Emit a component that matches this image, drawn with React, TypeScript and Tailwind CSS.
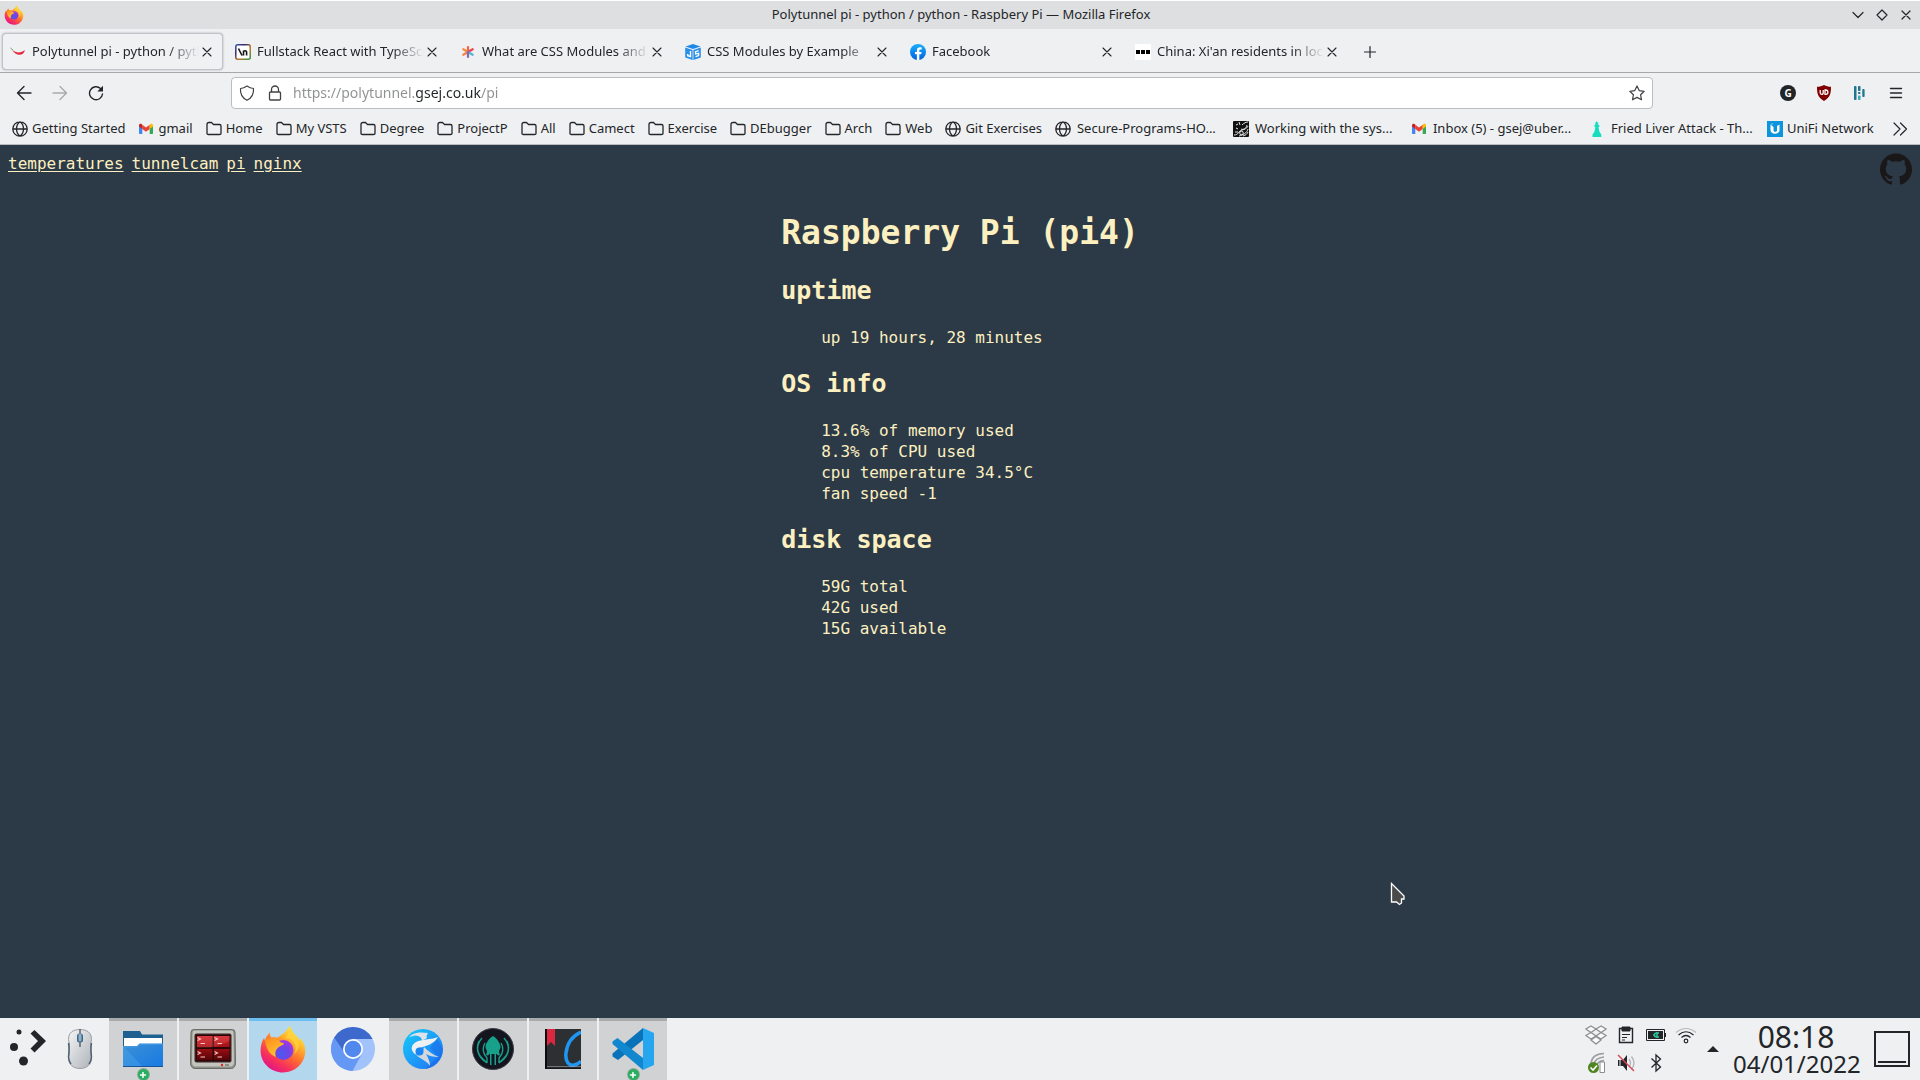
import React, { useId } from "react";
import { SiGithub } from "react-icons/si";

type IconProps = { className?: string };

/* ---------- brand marks ---------- */

function FirefoxLogo({ className }: IconProps) {
  const id = useId();
  return (
    <svg viewBox="0 0 46 48" className={className} aria-hidden="true">
      <defs>
        <linearGradient id={id + "body"} x1="0.85" y1="0.05" x2="0.25" y2="0.95">
          <stop offset="0" stopColor="#fff44f" />
          <stop offset="0.3" stopColor="#ffb32c" />
          <stop offset="0.55" stopColor="#ff6b30" />
          <stop offset="0.8" stopColor="#f7315c" />
          <stop offset="1" stopColor="#e31587" />
        </linearGradient>
        <radialGradient id={id + "globe"} cx="0.4" cy="0.7" r="0.8">
          <stop offset="0" stopColor="#4a5af0" />
          <stop offset="0.5" stopColor="#7542e5" />
          <stop offset="1" stopColor="#b833e1" />
        </radialGradient>
        <linearGradient id={id + "fox"} x1="0" y1="0" x2="0.6" y2="1">
          <stop offset="0" stopColor="#ff8a1e" />
          <stop offset="1" stopColor="#ffc52f" />
        </linearGradient>
      </defs>
      <path
        d="M30 1c.5 4 2 6 5.500 9 2 1.600 3 3.800 4 5.600.3-1.200.2-2 .1-3 4 4 5.900 8.500 5.700 13.700C44.900 38.500 35 47.500 23 47.500S.8 38.300.6 26c-.1-5 1.200-9.600 3.500-13.300.2 1 .3 1.900.9 2.700C6 12.500 7.500 9.500 10 7.500c-.2 2 .3 3.700 1.300 5.300 2-.6 4-.6 6-.1 2.500-2 5.700-3.500 7.700-5.700C26.500 5.300 28 3.200 30 1z"
        fill={`url(#${id}body)`}
      />
      <circle cx="23.500" cy="25" r="10" fill={`url(#${id}globe)`} />
      <path
        d="M5 15c2.500-2 5.500-2.700 8.500-2 3.500.4 5 2.500 7.500 4.500 1.500.6 3 .3 3.100 1.100-.7 2.200-4.800 2.500-6.600 4.600-2.500 2.300-2.500 5.800-1.500 8.800C10 30.200 6 24 5 15z"
        fill={`url(#${id}fox)`}
      />
      <path
        d="M25 13.500c3-1 6.400.4 8.500 3 2.500 3.300 3 8.500.5 13 4.200-3.500 5.600-8.500 4.200-13.500-1.300-4.200-5.400-7.800-8.200-15-2.300 4.500-1.500 8.300-5 12.500z"
        fill="#ffd43a"
        opacity="0.75"
      />
    </svg>
  );
}

function GmailMark({ className }: IconProps) {
  return (
    <svg viewBox="0 0 16 16" className={className} aria-hidden="true">
      <path d="M1 5v7.200c0 .5.300.8.800.8H4.300V6.700z" fill="#4285f4" />
      <path d="M11.700 6.700V13h2.500c.5 0 .8-.3.800-.8V5z" fill="#34a853" />
      <path d="M4.300 3.700v4.200L8 10.700l3.700-2.800V3.700L8 6.500z" fill="#ea4335" />
      <path d="M1 4.300v1.300l3.300 2.500V3.700l-.8-.6C2.400 2.300 1 3 1 4.300z" fill="#c5221f" />
      <path d="M15 4.300v1.300l-3.300 2.500V3.700l.8-.6c1.100-.8 2.500-.1 2.500 1.200z" fill="#fbbc04" />
    </svg>
  );
}

function ChilliIcon({ className }: IconProps) {
  return (
    <svg viewBox="0 0 16 16" className={className} aria-hidden="true">
      <path d="M2.300 5.800C6 9.300 11 9.200 14.900 6 13.800 12.500 5.500 12.500 2.300 5.800z" fill="#e5273f" />
      <path d="M.5 4l2.700 2.500" stroke="#5f9a55" strokeWidth="1" fill="none" />
    </svg>
  );
}

function NewlineIcon({ className }: IconProps) {
  const id = useId();
  return (
    <svg viewBox="0 0 16 16" className={className} aria-hidden="true">
      <defs>
        <linearGradient id={id} x1="0" y1="0" x2="1" y2="1">
          <stop offset="0" stopColor="#3454a4" />
          <stop offset="0.3" stopColor="#38266b" />
          <stop offset="0.6" stopColor="#bb7920" />
          <stop offset="1" stopColor="#2f8f4a" />
        </linearGradient>
      </defs>
      <rect x="0.800" y="0.800" width="14.400" height="14.400" rx="2" fill="#fff" stroke={`url(#${id})`} strokeWidth="1.500" />
      <path d="M3.500 4.500l3.500 7M8.500 11.500V6.500M8.500 8.500q0-1.800 1.600-1.800T11.600 8.500v3" stroke="#171719" strokeWidth="1.600" fill="none" />
    </svg>
  );
}

function AsteriskIcon({ className }: IconProps) {
  return (
    <svg viewBox="0 0 16 16" className={className} aria-hidden="true" strokeWidth="2.200" strokeLinecap="round">
      <path d="M8 8V3" stroke="#f4643c" />
      <path d="M8 8L3.300 5.200" stroke="#f58c3b" />
      <path d="M8 8l4.700-2.800" stroke="#ef3f55" />
      <path d="M8 8l-4.700 2.800" stroke="#f9813f" />
      <path d="M8 8l4.700 2.800" stroke="#52b8cf" />
      <path d="M8 8v5" stroke="#8a63b7" />
    </svg>
  );
}

function CubeIcon({ className }: IconProps) {
  return (
    <svg viewBox="0 0 16 16" className={className} aria-hidden="true">
      <path d="M8 0l7.500 2.500L8 5 .5 2.500z" fill="#1e88e5" />
      <path d="M.2 3.400l7.400 2.500V16L.2 13.500z" fill="#2a8fe9" />
      <path d="M15.800 3.400L8.400 5.900V16l7.400-2.500z" fill="#2a8fe9" />
      <path d="M5.500 7v5.500l-2.800-.8V10" stroke="#fff" strokeWidth="1.400" fill="none" />
      <path d="M13.600 6.700l-3 1v2.200l3-.6v2.300l-3 1" stroke="#fff" strokeWidth="1.300" fill="none" />
    </svg>
  );
}

function FacebookIcon({ className }: IconProps) {
  const id = useId();
  return (
    <svg viewBox="0 0 16 16" className={className} aria-hidden="true">
      <defs>
        <linearGradient id={id} x1="0" y1="0" x2="0" y2="1">
          <stop offset="0" stopColor="#19afff" />
          <stop offset="1" stopColor="#0062e0" />
        </linearGradient>
      </defs>
      <circle cx="8" cy="8" r="8" fill={`url(#${id})`} />
      <path d="M9.300 16V10.300h1.900l.4-2.200H9.300V6.700c0-.8.3-1.300 1.300-1.300h1.100V3.500c-.3-.1-1-.2-1.700-.2-1.900 0-3.100 1.200-3.100 3.200v1.600H5v2.200h1.900V16z" fill="#fff" />
    </svg>
  );
}

function BbcIcon({ className }: IconProps) {
  return (
    <svg viewBox="0 0 16 16" className={className} aria-hidden="true">
      <path d="M0 0h16v16H0z" fill="#fff" />
      <path d="M1 6h4v4H1zM6 6h4v4H6zM11 6h4v4h-4z" fill="#000" />
    </svg>
  );
}

/* ---------- line icons ---------- */

function Line({ d, className, box = 16, width = 1.2 }: { d: string; className?: string; box?: number; width?: number }) {
  return (
    <svg
      viewBox={`0 0 ${box} ${box}`}
      className={className}
      fill="none"
      stroke="currentColor"
      strokeWidth={width}
      strokeLinecap="round"
      strokeLinejoin="round"
      aria-hidden="true"
    >
      <path d={d} />
    </svg>
  );
}

const CROSS = "M4 4l8 8M12 4l-8 8";
const FOLDER = "M1 12.500V3.500Q1 1.500 3 1.500h2.500L7.500 3.500H13.500Q15 3.500 15 5v7.500Q15 13.500 13.500 13.500h-11Q1 13.500 1 12.500z";
const GLOBE =
  "M8 .8a7.200 7.200 0 1 0 0 14.400A7.200 7.200 0 0 0 8 .8zM8 .8C5 3 4.500 5.500 4.500 8s.5 5 3.500 7.200C11 13 11.500 10.500 11.500 8S11 3 8 .8zM1 8h14";

function SwirlIcon({ className }: IconProps) {
  return (
    <svg viewBox="0 0 16 16" className={className} aria-hidden="true">
      <rect width="16" height="16" rx="1" fill="#111" />
      <g stroke="#fff" strokeWidth="0.900" fill="none">
        <path d="M3 4l2-1M6 1l1 3M3 7l2 1M2 11h3M9 4c2-2 4-3 6-3M8 8c2 1 5 0 6-4M1 14c5 0 4-4 8-5s5-2 6-4M6 15c4-1 8-3 9-7M10 15c3-1 4-2 5-4" />
        <circle cx="8.500" cy="12" r="1.800" />
      </g>
    </svg>
  );
}

function ChessIcon({ className }: IconProps) {
  return (
    <svg viewBox="0 0 16 16" className={className} aria-hidden="true">
      <path d="M7.500 0l.8 1.500h1.200L9 3.500l2 1.500-1.500 1 .8 4.500 2 3V16H3.500v-2.500l2-3L6.300 6 4.800 5l1.700-1.500-.5-2h1z" fill="#15ddc0" />
    </svg>
  );
}

function UnifiIcon({ className }: IconProps) {
  return (
    <svg viewBox="0 0 16 16" className={className} aria-hidden="true">
      <path d="M0 0h16v16H0z" fill="#0c94dc" />
      <path d="M3.500 3.500v5.500c0 5 9 5 9 0V3.500L10 5v4.500c0 1.800-3.500 1.800-3.500 0V6z" fill="#fff" />
      <path d="M4.500 2.500h1v1h-1z" fill="#fff" />
    </svg>
  );
}

/* ---------- window data ---------- */

const tabs = [
  { title: "Polytunnel pi - python / python - Raspbery Pi", icon: ChilliIcon, active: true },
  { title: "Fullstack React with TypeScript", icon: NewlineIcon },
  { title: "What are CSS Modules and why", icon: AsteriskIcon },
  { title: "CSS Modules by Example", icon: CubeIcon },
  { title: "Facebook", icon: FacebookIcon },
  { title: "China: Xi'an residents in lockdown", icon: BbcIcon },
];

const Folder = ({ className }: IconProps) => <Line d={FOLDER} className={className} width={1.3} />;
const Globe = ({ className }: IconProps) => <Line d={GLOBE} className={className} width={1.3} />;

const bookmarks = [
  { label: "Getting Started", icon: Globe },
  { label: "gmail", icon: GmailMark },
  { label: "Home", icon: Folder },
  { label: "My VSTS", icon: Folder },
  { label: "Degree", icon: Folder },
  { label: "ProjectP", icon: Folder },
  { label: "All", icon: Folder },
  { label: "Camect", icon: Folder },
  { label: "Exercise", icon: Folder },
  { label: "DEbugger", icon: Folder },
  { label: "Arch", icon: Folder },
  { label: "Web", icon: Folder },
  { label: "Git Exercises", icon: Globe },
  { label: "Secure-Programs-HO...", icon: Globe, long: true },
  { label: "Working with the sys...", icon: SwirlIcon, long: true },
  { label: "Inbox (5) - gsej@uber...", icon: GmailMark, long: true },
  { label: "Fried Liver Attack - Th...", icon: ChessIcon, long: true },
  { label: "UniFi Network", icon: UnifiIcon },
];

function TitleBar() {
  return (
    <header className="grid h-[29px] grid-cols-[1fr_auto_1fr] items-center border-t border-white bg-[#dedfe1] pl-1 pr-0.5">
      <FirefoxLogo className="size-5" />
      <h1 className="text-[13px]">Polytunnel pi - python / python - Raspbery Pi — Mozilla Firefox</h1>
      <div className="flex justify-end">
        <button aria-label="Minimise" className="flex w-6 justify-center">
          <Line d="M3 5.500l5 5 5-5" className="size-4" />
        </button>
        <button aria-label="Maximise" className="flex w-6 justify-center">
          <Line d="M8 3l5 5-5 5-5-5z" className="size-4" />
        </button>
        <button aria-label="Close window" className="flex w-6 justify-center">
          <Line d={CROSS} className="size-4" />
        </button>
      </div>
    </header>
  );
}

function TabStrip() {
  return (
    <div className="flex h-11 items-center gap-1 border-b border-[#a6a8aa] pl-0.5 pt-0.5">
      {tabs.map(({ title, icon: Icon, active }) => (
        <div
          key={title}
          className={
            active
              ? "flex h-[37px] w-[221px] min-w-0 items-center gap-1.5 rounded border border-[#c3c4ca] bg-[#f0f1f3] pl-[7px] pr-[7px] shadow-[0_0_2px_#9fa0a8]"
              : "flex h-[37px] w-[221px] min-w-0 items-center gap-1.5 px-2"
          }
        >
          <Icon className="size-4 shrink-0" />
          <button className="min-w-0 flex-1 overflow-hidden whitespace-nowrap text-left [mask-image:linear-gradient(to_right,black_calc(100%-32px),transparent)]">
            {title}
          </button>
          <button aria-label={"Close " + title} className="-ml-1.5 shrink-0">
            <Line d={CROSS} className="size-4" width={1.1} />
          </button>
        </div>
      ))}
      <button aria-label="New tab" className="ml-2.5">
        <Line d="M8 2.500v11M2.500 8h11" className="size-4" />
      </button>
    </div>
  );
}

function NavBar() {
  return (
    <div className="flex h-10 items-center px-1.5">
      <button aria-label="Back" className="flex w-9 justify-center">
        <Line d="M15 8H1.500M8 1.500L1.500 8 8 14.500" className="size-4" width={1.4} />
      </button>
      <button aria-label="Forward" className="flex w-9 justify-center text-[#a9abad]">
        <Line d="M1 8h13.500M8 1.500L14.500 8 8 14.500" className="size-4" width={1.4} />
      </button>
      <button aria-label="Reload" className="flex w-9 justify-center">
        <svg viewBox="0 0 16 16" className="size-4" aria-hidden="true">
          <path d="M12.500 3.500A6.500 6.500 0 1 0 14.500 9" fill="none" stroke="currentColor" strokeWidth="1.400" strokeLinecap="round" />
          <path d="M15 .800V6.500H9.300z" fill="currentColor" />
        </svg>
      </button>
      <form className="mx-[117px] flex h-8 flex-1 items-center rounded border border-[#bbbdbf] bg-white px-[7px]">
        <Line d="M8 1c2 1.500 4 2.300 6.500 2.500C15 9 12.500 13 8 15.300 3.500 13 1 9 1.500 3.500 4 3.300 6 2.500 8 1z" className="size-4 text-[#3f4144]" />
        <Line d="M3.500 7h9q1 0 1 1v6q0 1-1 1h-9q-1 0-1-1V8q0-1 1-1zM4.500 7V4.500a3.500 3.500 0 0 1 7 0V7" className="ml-3 size-4 text-[#3f4144]" width={1.3} />
        <input
          aria-label="Address"
          defaultValue="https://polytunnel.gsej.co.uk/pi"
          className="ml-2.5 min-w-0 flex-1 bg-[linear-gradient(to_right,#8e9092_122px,#232629_122px,#232629_188px,#8e9092_188px)] bg-clip-text text-sm text-transparent caret-black outline-none"
        />
        <button type="button" aria-label="Bookmark this page">
          <Line d="M8 1l2.200 4.600 5 .7-3.600 3.500.9 5L8 12.400l-4.500 2.400.9-5L.8 6.300l5-.7z" className="size-4 text-[#3f4144]" />
        </button>
      </form>
      <button aria-label="Grammar extension" className="flex w-9 justify-center">
        <span className="flex size-4 items-center justify-center rounded-full bg-[#222528] text-[10px] font-bold text-white">G</span>
      </button>
      <button aria-label="Content blocker" className="flex w-9 justify-center">
        <svg viewBox="0 0 16 16" className="size-4" aria-hidden="true">
          <path d="M8 0c2 1.300 4.300 1.700 7 1.800 0 6-.5 10.700-7 14.200C1.500 12.500 1 7.800 1 1.800 3.700 1.700 6 1.300 8 0z" fill="#800000" />
          <path d="M4.200 5v2.800q0 1.500 1.500 1.500t1.500-1.500V5M9 5v4.300h.8q2.100 0 2.100-2.100T9.800 5z" stroke="#fff" strokeWidth="1.300" fill="none" />
        </svg>
      </button>
      <button aria-label="Annotations" className="flex w-9 justify-center">
        <svg viewBox="0 0 16 16" className="size-4" fill="#20768c" aria-hidden="true">
          <rect x="2" y="1" width="2.500" height="14" rx="0.800" />
          <rect x="6" y="1" width="2.500" height="5" rx="0.800" />
          <rect x="6" y="10.500" width="2.500" height="4.500" rx="0.800" fill="#3fa6bb" />
          <rect x="6" y="7" width="2.500" height="2" rx="0.800" />
          <rect x="10.300" y="4" width="2.300" height="8" rx="0.800" />
        </svg>
      </button>
      <button aria-label="Menu" className="flex w-9 justify-center">
        <Line d="M2.500 3.500h11M2.500 8h11M2.500 12.500h11" className="size-4" width={1.4} />
      </button>
    </div>
  );
}

function BookmarksBar() {
  return (
    <nav aria-label="Bookmarks" className="flex h-8 items-center gap-[13px] overflow-hidden whitespace-nowrap border-b border-[#b9bbbd] px-3">
      {bookmarks.map(({ label, icon: Icon, long }) => (
        <button key={label} className={long ? "flex min-w-[165px] items-center gap-1.5" : "flex items-center gap-1"}>
          <Icon className="size-4 shrink-0" />
          {label}
        </button>
      ))}
      <button aria-label="More bookmarks" className="ml-auto">
        <Line d="M2 2l6 6-6 6M8.500 2l6 6-6 6" className="size-4" />
      </button>
    </nav>
  );
}

/* ---------- page ---------- */

const links = ["temperatures", "tunnelcam", "pi", "nginx"];

const sections = [
  { heading: "uptime", lines: ["up 19 hours, 28 minutes"] },
  {
    heading: "OS info",
    lines: ["13.6% of memory used", "8.3% of CPU used", "cpu temperature 34.5°C", "fan speed -1"],
  },
  { heading: "disk space", lines: ["59G total", "42G used", "15G available"] },
];

function StatusPage() {
  return (
    <main className="relative flex-1 bg-[#2c3946] font-['DejaVu_Sans_Mono',monospace] text-base text-[#fcf0c0]">
      <div className="flex h-[65px] items-start justify-between p-2">
        <nav className="flex gap-2 leading-[21px]">
          {links.map((link) => (
            <a key={link} href={"#" + link} className="underline underline-offset-2">
              {link}
            </a>
          ))}
        </nav>
        <a href="#source" aria-label="Source on GitHub" className="text-[#191717]">
          <SiGithub className="size-8" />
        </a>
      </div>
      <article className="mx-auto w-fit">
        <h2 className="mb-5 text-[33px] font-bold leading-[45px]">Raspberry Pi (pi4)</h2>
        {sections.map(({ heading, lines }) => (
          <section key={heading} className="mb-5">
            <h3 className="mb-5 text-[25px] font-bold leading-8">{heading}</h3>
            <ul className="pl-10 leading-[21px]">
              {lines.map((line) => (
                <li key={line}>{line}</li>
              ))}
            </ul>
          </section>
        ))}
      </article>
      <svg viewBox="0 0 16 24" className="absolute left-[1390px] top-[737px] h-6 w-4" aria-hidden="true">
        <path d="M1.500 1.500v18.500h5l3 2.500 2-1.500v-4h2.500v-3z" fill="#4b4b4b" stroke="#fff" strokeWidth="1.300" />
      </svg>
    </main>
  );
}

/* ---------- taskbar icons ---------- */

function LauncherIcon() {
  return (
    <svg viewBox="0 0 36 40" className="h-10 w-9" fill="#232629" aria-hidden="true">
      <circle cx="9" cy="5" r="2.500" />
      <circle cx="4" cy="20" r="4" />
      <circle cx="13.500" cy="34" r="4.500" />
      <path d="M20.500 6.500l4-3.500L36 14 24.500 25.500l-4-4L28 14z" />
    </svg>
  );
}

function MouseIcon() {
  const id = useId();
  return (
    <svg viewBox="0 0 26 42" className="h-[42px] w-[26px]" aria-hidden="true">
      <defs>
        <linearGradient id={id} x1="0" y1="0" x2="1" y2="1">
          <stop offset="0" stopColor="#f4f5f6" />
          <stop offset="1" stopColor="#aeb2b8" />
        </linearGradient>
      </defs>
      <path d="M13 1.500c7 0 11.500 3 11.500 10-1.500 6-1 12 0 18C24.500 36.500 20 40.500 13 40.500S1.500 36.500 1.500 29.500c1-6 1.500-12 0-18 0-7 4.500-10 11.500-10z" fill={`url(#${id})`} stroke="#9a9ea4" />
      <path d="M1.500 15c1 5 .5 10 0 14 .3 3 1 5 2.500 7M24.500 15c-1 5-.5 10 0 14-.3 3-1 5-2.500 7" fill="none" stroke="#51616f" strokeWidth="1.500" />
      <path d="M13 1v18" stroke="#596570" strokeWidth="1.500" />
      <rect x="10" y="5.500" width="6" height="9" rx="2.500" fill="#44637e" />
      <rect x="11.500" y="5.500" width="3" height="8" rx="1.500" fill="#88b3d1" />
    </svg>
  );
}

function FilesIcon() {
  const id = useId();
  return (
    <svg viewBox="0 0 40 36" className="h-9 w-10" aria-hidden="true">
      <defs>
        <linearGradient id={id} x1="0" y1="0" x2="1" y2="1">
          <stop offset="0" stopColor="#3c90d4" />
          <stop offset="1" stopColor="#1779e4" />
        </linearGradient>
      </defs>
      <path d="M0 0h17l2 3.500h21V20H0z" fill="#1e608f" />
      <path d="M1 7h38v12H1z" fill="#fff" />
      <path d="M0 15h14l2.500-2.500H40V36H0z" fill={`url(#${id})`} />
      <path d="M0 15h14l2.500-2.500H40V14H17l-2.500 2.500H0zM0 15l20 21H0z" fill="#5eb3f3" opacity="0.300" />
      <path d="M0 35h40v1H0z" fill="#155597" />
    </svg>
  );
}

function TerminalsIcon() {
  const id = useId();
  return (
    <svg viewBox="0 0 46 40" className="h-10 w-[46px]" aria-hidden="true">
      <defs>
        <linearGradient id={id} x1="0" y1="0" x2="0" y2="1">
          <stop offset="0" stopColor="#d0242a" />
          <stop offset="0.500" stopColor="#9c0f13" />
          <stop offset="1" stopColor="#560408" />
        </linearGradient>
      </defs>
      <path d="M3.500.5h39q2.500 0 2.500 3l.5 30q0 5.500-4 6h-37q-4-.5-4-6l.5-30q0-3 2.500-3z" fill="#8d9088" stroke="#6a6d67" />
      <path d="M4.500 1.500h37q2 0 2 2.500l.5 29q0 4-3 4.500H5q-3-.5-3-4.500L2.500 4q0-2.500 2-2.500z" fill="#c2c4bd" />
      <rect x="4.500" y="4.500" width="37" height="29" rx="2" fill="#3a2022" />
      <rect x="6" y="6" width="34" height="26" fill="#2b0607" />
      <path d="M7 7h15.500v11H7zM24 7h15.500v11H24zM7 20h15.500v11H7zM24 20h15.500v11H24z" fill={`url(#${id})`} />
      <path d="M7 18.500h13q12-2 19.500-7V7H7z" fill="#ff8080" opacity="0.220" />
      <path d="M7.500 8.500l3 1.500-3 1.500M10.500 14.500h4.500M24.500 8.500l3 1.500-3 1.500M27.500 14.500h4.500M7.500 22.500l3 1.500-3 1.500M10.500 28h4.500M24.500 22.500l3 1.500-3 1.500M27.500 28h4.500" stroke="#ffc7c7" strokeWidth="1.100" fill="none" />
      <circle cx="32" cy="36" r="1.200" fill="#ec1c24" />
      <path d="M35 35h4v2h-4z" fill="#8a8d86" />
    </svg>
  );
}

function ChromiumIcon() {
  return (
    <svg viewBox="0 0 44 44" className="size-11" aria-hidden="true">
      <circle cx="22" cy="22" r="22" fill="#a1c2fa" />
      <path d="M3.200 10.600A22 22 0 0 0 21.500 44l9-16.500L22 12z" fill="#6598f4" />
      <path d="M3.200 10.600A22 22 0 0 1 41.600 12H22l-9.500 12z" fill="#3c69cb" />
      <circle cx="22" cy="22" r="10" fill="#fff" />
      <circle cx="22" cy="22" r="8.300" fill="#5188ee" />
    </svg>
  );
}

function FalconIcon() {
  const id = useId();
  return (
    <svg viewBox="0 0 40 40" className="size-10" aria-hidden="true">
      <defs>
        <linearGradient id={id} x1="0" y1="0" x2="1" y2="1">
          <stop offset="0" stopColor="#16ccf9" />
          <stop offset="1" stopColor="#2270f7" />
        </linearGradient>
      </defs>
      <circle cx="20" cy="20" r="20" fill={`url(#${id})`} />
      <path d="M34 9l6 11c0 11-9 19-18 20l4-4 9-8-8-9z" fill="#1560dc" opacity="0.400" />
      <path d="M6 8.500C9 4 16 2.500 25 4c-1 2-2 3-1 5l-5 3c0-3-2-5-6-5.500-3 0-5 1-7 2z" fill="#dfe3e7" />
      <path d="M21 18c4 4 9 8 15 10-6 0-10-1-13-3 2 4 4 7 4 12-3-5-9-7-14-11 4 1 7-1 8-8z" fill="#d3d8dd" />
      <path d="M35 8C31 15 23 17 16 19c-3 1-3 4-1 7l-3-1c-5-4-4-9 1-12 6-3 14-2 22-5z" fill="#eef0f2" />
      <circle cx="16.500" cy="22.500" r="4" fill="#1a86f5" />
    </svg>
  );
}

function KrakenIcon() {
  return (
    <svg viewBox="0 0 42 42" className="size-[42px]" aria-hidden="true">
      <circle cx="21" cy="21" r="20.500" fill="#15151f" stroke="#3a3d48" />
      <path d="M21 8c3 1.500 7.500 7 7.500 11 0 2-1.500 3-1.500 5l1 3-2 .5-2-2V37h-1.500V26h-3v11H18V25.500l-2 2-2-.5 1-3c0-2-1.500-3-1.500-5C13.500 15 18 9.500 21 8z" fill="#17a08a" />
      <path d="M10 10c-6 7-6 15 1 21l4 4M32 10c6 7 6 15-1 21l-4 4M7 13c-4 9 0 17 8 22M35 13c4 9 0 17-8 22M13 15c-3 5-2 11 2 15v5M29 15c3 5 2 11-2 15v5" stroke="#17a08a" strokeWidth="1.400" fill="none" />
    </svg>
  );
}

function ReaderIcon() {
  return (
    <svg viewBox="0 0 36 40" className="h-10 w-9" aria-hidden="true">
      <path d="M0 0h36v40H0z" fill="#2d3033" />
      <path d="M0 0h2v40H0z" fill="#0b0c0d" />
      <path d="M2 0h8v17l-4-4-4 4z" fill="#dc2740" />
      <path d="M36 3c-9 4-14 12-15 21-1 9 3 13 8 12 3-.5 5-1.500 7-4" fill="none" stroke="#1f97f2" strokeWidth="3.500" />
      <path d="M2 38h34" stroke="#b8babc" />
      <path d="M0 39h36" stroke="#101112" strokeWidth="1.500" />
    </svg>
  );
}

function CodeIcon() {
  return (
    <svg viewBox="0 0 42 42" className="size-[42px]" aria-hidden="true">
      <path d="M31 0l11 5v32l-11 5z" fill="#27a6f0" />
      <path d="M31 0L.5 25.500v3L6 32 31 12z" fill="#0a72b8" />
      <path d="M.5 13.500L5.500 10 31 30v12L.5 16z" fill="#1187cf" />
    </svg>
  );
}

const tasks = [
  { name: "Files", icon: <FilesIcon />, state: "open", badge: true },
  { name: "Terminals", icon: <TerminalsIcon />, state: "open" },
  { name: "Firefox", icon: <FirefoxLogo className="h-12 w-[46px]" />, state: "active" },
  { name: "Chromium", icon: <ChromiumIcon />, state: "closed" },
  { name: "Falkon", icon: <FalconIcon />, state: "open" },
  { name: "GitKraken", icon: <KrakenIcon />, state: "open" },
  { name: "Reader", icon: <ReaderIcon />, state: "open" },
  { name: "Code", icon: <CodeIcon />, state: "open", badge: true },
];

const taskStyle: Record<string, string> = {
  open: "border-[#a9aaac] bg-[#d1d2d4]",
  active: "border-[#6cbeee] bg-[#b3d8ed]",
  closed: "border-transparent",
};

function Tray() {
  return (
    <div className="grid grid-cols-4 gap-x-2 gap-y-1.5">
      <svg viewBox="0 0 22 22" className="size-[22px]" fill="#fafafa" stroke="#8b8d8f" strokeWidth="1.300" strokeLinejoin="round" aria-hidden="true">
        <path d="M6 2l5 3-5 3.500L.8 5zM16 2l5.200 3L16 8.500 11 5zM6 8.500l5 3.500-5 3-5.200-3.500zM16 8.500l5.200 3L16 15l-5-3zM6 16l5-3.500 5 3.500-5 4z" />
      </svg>
      <svg viewBox="0 0 22 22" className="size-[22px]" fill="none" stroke="#232629" aria-hidden="true">
        <path d="M4.500 4.500h13v14h-13z" strokeWidth="1.400" />
        <path d="M7 3h8v4H7z" fill="#232629" />
        <path d="M7 10.500h8M7 13.500h5M7 16h3" />
      </svg>
      <svg viewBox="0 0 22 22" className="size-[22px]" aria-hidden="true">
        <path d="M1.500 5.500h18v11h-18z" fill="none" stroke="#232629" />
        <path d="M3 7h15v8H3zM19.500 9H21v4h-1.500z" fill="#232629" />
        <path d="M8 11h2M14 9h-2.500q-2 0-2 2t2 2H14M12 8v6" stroke="#2bc59b" strokeWidth="1.500" fill="none" />
      </svg>
      <svg viewBox="0 0 22 22" className="size-[22px]" fill="none" stroke="#232629" strokeWidth="1.200" aria-hidden="true">
        <path d="M1 8.500q10-8 20 0" stroke="#b6b8ba" />
        <path d="M3.500 11q7.500-6.500 15 0M6.500 13.500q4.500-4 9 0" />
        <circle cx="11" cy="17" r="1.800" />
      </svg>
      <svg viewBox="0 0 22 22" className="size-[22px]" aria-hidden="true">
        <path d="M6 11Q7 2 19 1.500M9 12q1-6 10-7M12 13q1-4 7-4.500" stroke="#9b9da0" strokeWidth="1.600" fill="none" />
        <path d="M15 10h4.500v10.500H15z" fill="#fff" stroke="#8b8d8f" />
        <circle cx="8.500" cy="15.500" r="5.500" fill="#4f8420" />
        <path d="M5.500 15.500l2.500 2.500 4-4.500" stroke="#fff" strokeWidth="1.600" fill="none" />
      </svg>
      <svg viewBox="0 0 22 22" className="size-[22px]" aria-hidden="true">
        <path d="M3 8h1.500v6H3zM5.500 8H8l4-5v16l-4-5H5.500z" fill="#232629" />
        <path d="M14 7q3 4 0 8M16.500 4.500q5 6.500 0 13" stroke="#b0b2b4" strokeWidth="1.300" fill="none" />
        <path d="M3 3l16 16" stroke="#da4453" strokeWidth="1.400" />
      </svg>
      <svg viewBox="0 0 22 22" className="size-[22px]" fill="none" stroke="#232629" strokeWidth="1.300" aria-hidden="true">
        <path d="M6.500 6.500l9 8.500-4.500 4V3l4.500 4-9 8.500" />
      </svg>
    </div>
  );
}

function Taskbar() {
  return (
    <footer className="flex h-[62px] items-stretch bg-[#eff0f2] pr-2.5">
      <button aria-label="Application launcher" className="flex w-[52px] items-center justify-center pb-1 pl-1">
        <LauncherIcon />
      </button>
      <button aria-label="Mouse settings" className="mr-px flex w-14 items-center justify-center">
        <MouseIcon />
      </button>
      <div className="flex gap-0.5">
        {tasks.map(({ name, icon, state, badge }) => (
          <button key={name} aria-label={name} className={"relative flex w-[68px] items-center justify-center border-t-[3px] pb-1 " + taskStyle[state]}>
            {icon}
            {badge && (
              <span className="absolute inset-x-0 bottom-0 mx-auto flex size-[11px] items-center justify-center rounded-full bg-[#27ae60] text-white ring-1 ring-[#94a89b]">
                <Line d="M8 3v10M3 8h10" className="size-2" width={3} />
              </span>
            )}
          </button>
        ))}
      </div>
      <div className="ml-auto flex items-center">
        <Tray />
        <button aria-label="Show hidden icons" className="ml-1 flex w-6 justify-center">
          <svg viewBox="0 0 12 6" className="h-1.5 w-3" aria-hidden="true">
            <path d="M6 0l6 6H0z" fill="#232629" />
          </svg>
        </button>
        <time className="ml-2 w-[126px] whitespace-nowrap text-center" dateTime="2022-01-04T08:18">
          <span className="block text-[30px] leading-[30px]">08:18</span>
          <span className="block text-2xl leading-6">04/01/2022</span>
        </time>
        <button aria-label="Show desktop" className="ml-[15px] flex size-9 items-end border-2 border-[#232629] p-0.5">
          <span className="h-0.5 w-full bg-[#232629]" />
        </button>
      </div>
    </footer>
  );
}

export default function App() {
  return (
    <div className="flex min-h-screen flex-col bg-[#eff0f2] font-['Noto_Sans',sans-serif] text-[13px] text-[#232629]">
      <TitleBar />
      <TabStrip />
      <NavBar />
      <BookmarksBar />
      <StatusPage />
      <Taskbar />
    </div>
  );
}
